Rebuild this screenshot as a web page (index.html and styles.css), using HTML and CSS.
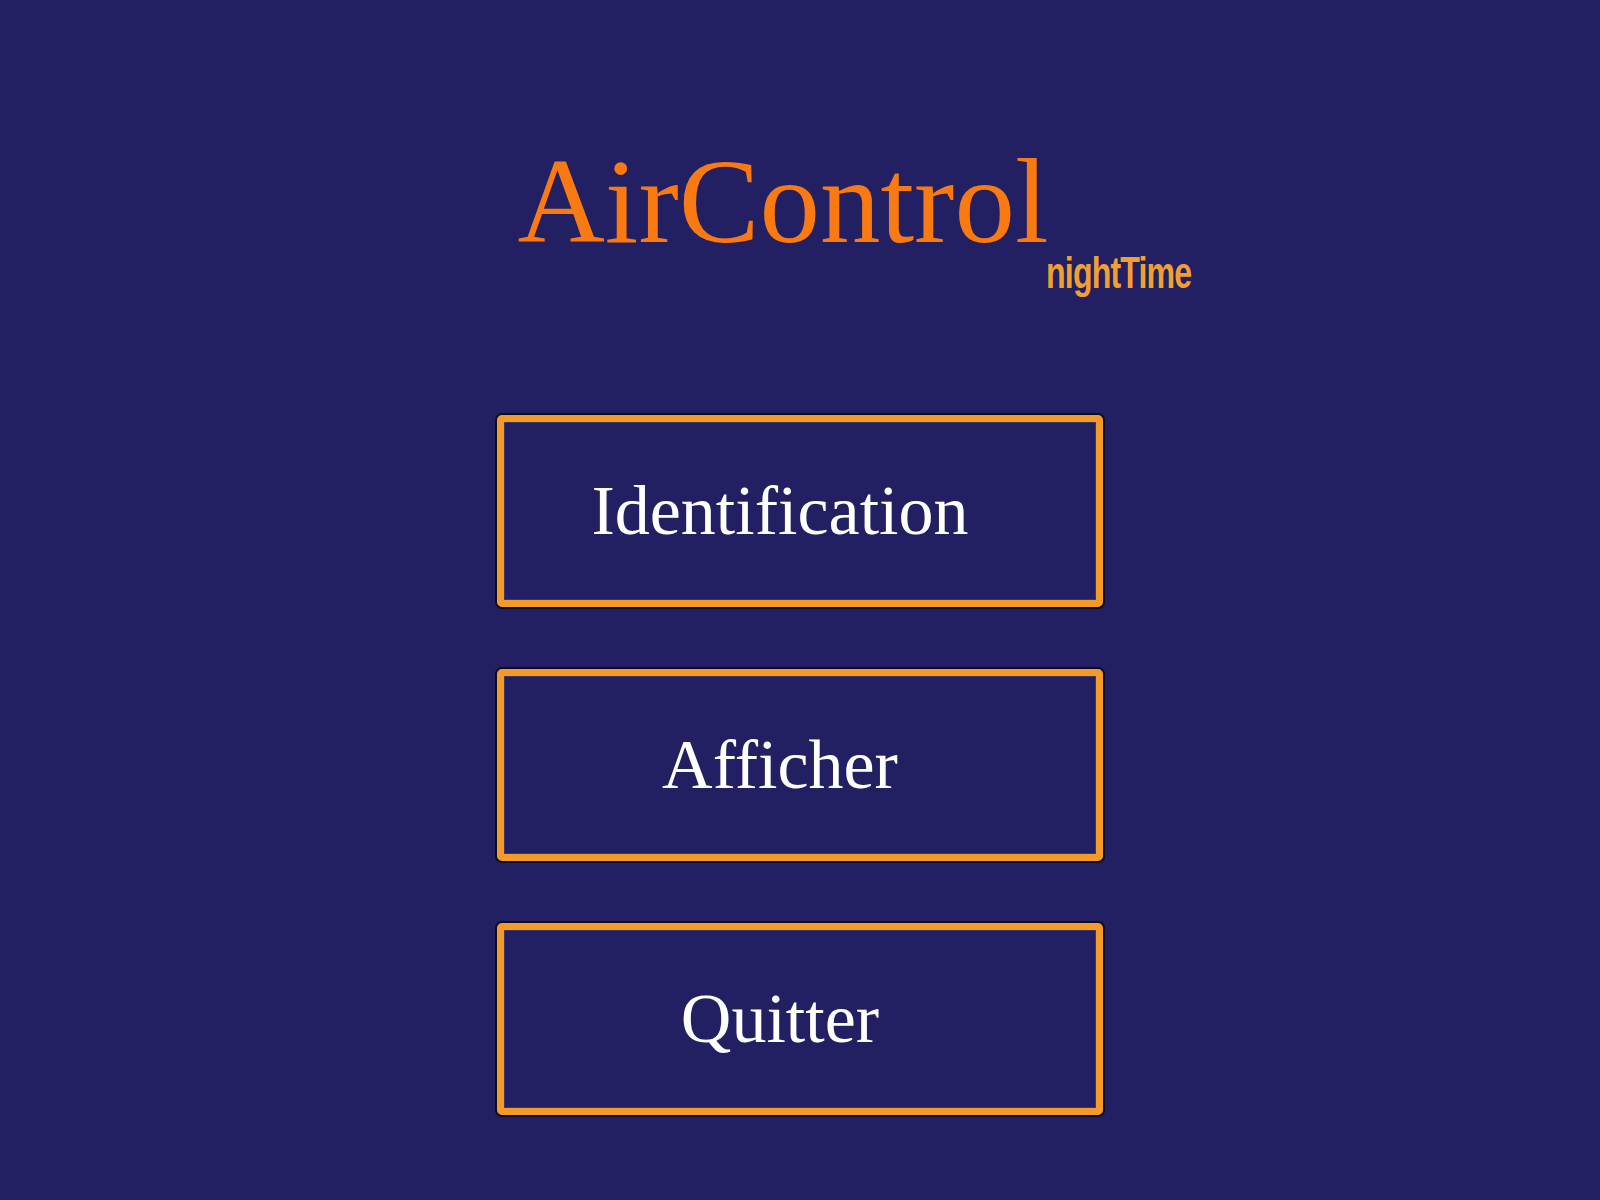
FILE: index.html
```html
<!DOCTYPE html>
<html lang="fr">
<head>
<meta charset="utf-8">
<title>AirControl nightTime</title>
<link rel="stylesheet" href="styles.css">
</head>
<body>
<main class="screen">
  <h1 class="title"><span class="title-main">AirControl</span><span class="title-sub">nightTime</span></h1>
  <nav class="menu">
    <button class="menu-btn" type="button">Identification</button>
    <button class="menu-btn" type="button">Afficher</button>
    <button class="menu-btn" type="button">Quitter</button>
  </nav>
</main>
</body>
</html>
```
FILE: styles.css
```css
html, body {
  margin: 0;
  padding: 0;
  background: #221f62;
}

.screen {
  width: 1600px;
  height: 1200px;
  box-sizing: border-box;
  padding-top: 141px;
  display: flex;
  flex-direction: column;
  align-items: center;
  font-family: "Liberation Serif", "Times New Roman", serif;
}

.title {
  position: relative;
  margin: 0 34px 0 0;
  font-weight: normal;
  font-size: 121px;
  line-height: 1;
  color: #f97a12;
  display: inline-block;
}

.title-main {
  display: inline-block;
}

.title-sub {
  position: absolute;
  left: 100%;
  top: 109px;
  margin-left: -3px;
  font-family: "Liberation Sans Narrow", "Liberation Sans", Arial, sans-serif;
  font-weight: bold;
  font-size: 45px;
  line-height: 1;
  letter-spacing: -1.2px;
  color: #f0a032;
  white-space: nowrap;
  transform: scaleX(0.715);
  transform-origin: left center;
}

.menu {
  margin-top: 153px;
  display: flex;
  flex-direction: column;
  gap: 62px;
}

.menu-btn {
  width: 606px;
  height: 192px;
  box-sizing: border-box;
  border: 7px solid #f39a28;
  border-radius: 5px;
  background: #221f62;
  box-shadow: 0 0 0 2px #0d0c26, inset 0 0 0 1px #3a3866;
  color: #ffffff;
  font-family: "Liberation Serif", "Times New Roman", serif;
  font-size: 70px;
  line-height: 1;
  padding: 0 40px 0 0;
  text-align: center;
  cursor: pointer;
}
```
